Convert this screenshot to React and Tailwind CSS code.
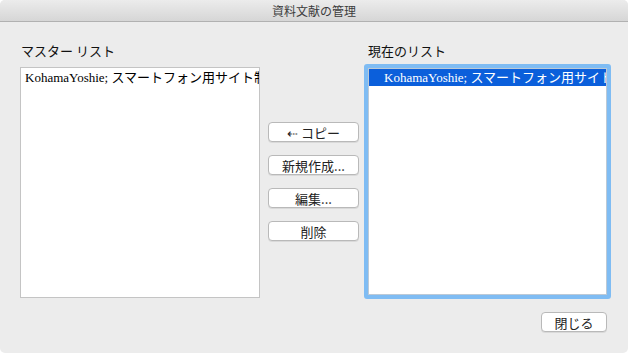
import React from 'react';

const jp = { fontFamily: '"Noto Sans CJK JP", "Noto Sans", sans-serif' };
const mixed = { fontFamily: '"Liberation Serif", "Noto Sans CJK JP", serif' };

const Btn = ({ children, className = '' }) => (
  <button
    className={`h-[20px] rounded-[4px] border border-[#b9b9b9] bg-white text-[13px] leading-none text-[#222] shadow-[0_1px_0_rgba(0,0,0,0.08)] ${className}`}
    style={jp}
  >
    {children}
  </button>
);

const App = () => {
  const item = 'KohamaYoshie; スマートフォン用サイト制作';

  return (
    <div className="w-[628px] h-[353px] bg-white">
      <div className="w-full h-full rounded-[5px] overflow-hidden bg-[#ececec] flex flex-col">
        <div className="h-[22px] flex items-center justify-center bg-gradient-to-b from-[#ececec] to-[#d6d6d6] border-b border-[#b1b1b1]">
          <span className="text-[12px] text-[#3c3c3c] leading-none" style={jp}>
            資料文献の管理
          </span>
        </div>

        <div className="flex pl-[20px] pt-[21px]">
          <div className="w-[240px] flex flex-col">
            <div className="h-[16px] pl-[1px] text-[13px] leading-[16px] text-[#111]" style={jp}>
              マスター リスト
            </div>
            <div className="mt-[8px] h-[231px] bg-white border border-[#c4c4c4] overflow-hidden">
              <div className="pl-[4px] pt-[1px] whitespace-nowrap text-[13px] leading-[17px] text-black" style={mixed}>
                {item}
              </div>
            </div>
          </div>

          <div className="w-[91px] ml-[8px] pt-[79px] flex flex-col gap-[13px]">
            <Btn>⇠ コピー</Btn>
            <Btn>新規作成...</Btn>
            <Btn>編集...</Btn>
            <Btn>削除</Btn>
          </div>

          <div className="w-[247px] ml-[5px] flex flex-col">
            <div className="h-[16px] pl-[4px] text-[13px] leading-[16px] text-[#111]" style={jp}>
              現在のリスト
            </div>
            <div className="mt-[5px] h-[235px] rounded-[3px] border-[4px] border-[#7fbcf3] bg-white overflow-hidden">
              <div className="h-full border border-[#bcc9d6] overflow-hidden">
                <div
                  className="h-[17px] bg-[#0b5fdb] pl-[15px] whitespace-nowrap text-[13px] leading-[17px] text-white"
                  style={mixed}
                >
                  {item}
                </div>
              </div>
            </div>
          </div>
        </div>

        <div className="flex justify-end pr-[21px] mt-[13px]">
          <Btn className="w-[66px]">閉じる</Btn>
        </div>
      </div>
    </div>
  );
};

export default App;
